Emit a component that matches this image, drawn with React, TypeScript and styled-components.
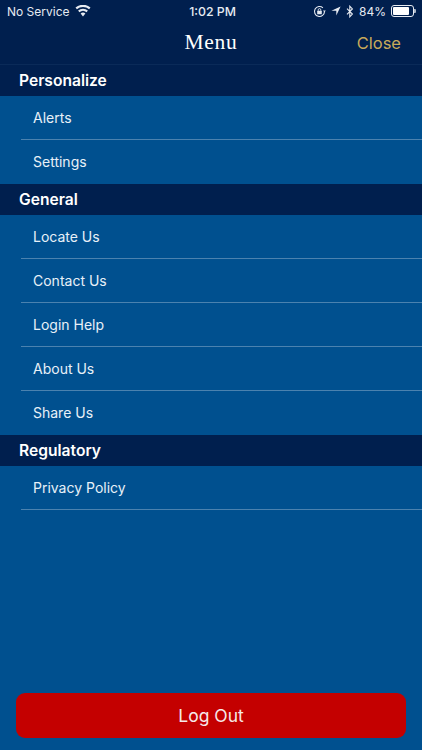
import React from "react";
import styled, { createGlobalStyle } from "styled-components";

const Global = createGlobalStyle`
  html, body { margin: 0; padding: 0; background: #00508f; }
  * { box-sizing: border-box; }
`;

const Screen = styled.div`
  width: 422px;
  height: 750px;
  display: flex;
  flex-direction: column;
  overflow: hidden;
  background: #00508f;
  color: #fff;
  font-family: Inter, "Liberation Sans", sans-serif;
`;

const Status = styled.div`
  height: 22px;
  padding: 0 5px 0 7px;
  display: grid;
  grid-template-columns: 1fr auto 1fr;
  align-items: center;
  background: #001f4e;
  font-size: 12px;
  color: #e6ebf2;
`;

const StatusLeft = styled.div`
  display: flex;
  align-items: center;
  gap: 5px;
`;

const StatusRight = styled.div`
  display: flex;
  align-items: center;
  justify-content: flex-end;
  gap: 5px;
`;

const Time = styled.div`
  font-weight: 500;
  font-size: 12.3px;
  margin-left: 1px;
`;

const Battery = styled.div`
  width: 23px;
  height: 12px;
  border: 1px solid #e6ebf2;
  border-radius: 3px;
  padding: 1px;
  position: relative;
  margin-right: 3px;
  &::after {
    content: "";
    position: absolute;
    right: -3px;
    top: 3px;
    width: 2px;
    height: 4px;
    background: #aab5c6;
    border-radius: 0 1px 1px 0;
  }
`;

const BatteryFill = styled.div`
  height: 100%;
  width: 84%;
  background: #fff;
  border-radius: 1px;
`;

const Nav = styled.div`
  height: 43px;
  display: flex;
  align-items: center;
  justify-content: center;
  position: relative;
  background: #001f4e;
  border-bottom: 1px solid #0a2a58;
`;

const Title = styled.div`
  font-family: "Liberation Serif", serif;
  font-size: 21.5px;
  letter-spacing: 0.7px;
  margin-top: -2px;
`;

const Close = styled.button`
  position: absolute;
  right: 21px;
  top: 11px;
  border: 0;
  padding: 0;
  background: none;
  color: #c8aa5a;
  font: 400 16.5px Inter, "Liberation Sans", sans-serif;
`;

const SectionHeader = styled.div`
  height: 31px;
  padding-left: 19px;
  padding-bottom: 1px;
  display: flex;
  align-items: center;
  background: #001f4e;
  font-size: 15.6px;
  font-weight: 600;
`;

const Row = styled.div<{ $line?: boolean }>`
  height: 44px;
  margin-left: 21px;
  padding-left: 12px;
  padding-bottom: 1px;
  display: flex;
  align-items: center;
  font-size: 14px;
  color: #e8f0f8;
  border-bottom: ${(p) => (p.$line ? "1px solid #4b82af" : "0")};
`;

const Spacer = styled.div`
  flex: 1;
`;

const LogOut = styled.button`
  height: 45px;
  margin: 0 16px 12.5px;
  border: 0;
  border-radius: 9px;
  background: #c40000;
  color: #f6e9e9;
  font: 400 17.5px Inter, "Liberation Sans", sans-serif;
`;

const Wifi = () => (
  <svg width="16" height="12" viewBox="0 0 16 12" fill="#e6ebf2">
    <path d="M8 11.5 5.6 8.6a3.6 3.6 0 0 1 4.8 0L8 11.5Z" />
    <path d="M4.4 7.2 3.1 5.6a7.4 7.4 0 0 1 9.8 0l-1.3 1.6a5.5 5.5 0 0 0-7.2 0Z" />
    <path d="M1.9 4.2.5 2.6a11.3 11.3 0 0 1 15 0l-1.4 1.6a9.3 9.3 0 0 0-12.2 0Z" />
  </svg>
);

const RotationLock = () => (
  <svg width="13" height="13" viewBox="0 0 13 13" fill="none" stroke="#e6ebf2">
    <path d="M11.5 6.5a5 5 0 1 1-1.6-3.7" strokeWidth="1.1" />
    <path d="M12.8 5.4h-2.8l1.4 2Z" fill="#e6ebf2" stroke="none" />
    <rect x="4.2" y="5.8" width="4.6" height="3.5" rx=".5" fill="#e6ebf2" stroke="none" />
    <path d="M5.2 5.8V4.9a1.3 1.3 0 0 1 2.6 0v.9" strokeWidth=".9" />
  </svg>
);

const Location = () => (
  <svg width="10" height="10" viewBox="0 0 10 10" fill="#e6ebf2">
    <path d="M9.6.4 5.3 9.6V4.7H.4Z" />
  </svg>
);

const Bluetooth = () => (
  <svg width="8" height="13" viewBox="0 0 8 13" fill="none" stroke="#e6ebf2" strokeWidth="1.1">
    <path d="M1 3.6 6.4 9 3.8 11.8V1.2L6.4 4 1 9.4" />
  </svg>
);

const sections = [
  { title: "Personalize", items: ["Alerts", "Settings"] },
  { title: "General", items: ["Locate Us", "Contact Us", "Login Help", "About Us", "Share Us"] },
  { title: "Regulatory", items: ["Privacy Policy"] },
];

export default function App() {
  return (
    <Screen>
      <Global />
      <Status>
        <StatusLeft>
          No Service <Wifi />
        </StatusLeft>
        <Time>1:02 PM</Time>
        <StatusRight>
          <RotationLock />
          <Location />
          <Bluetooth />
          <span>84%</span>
          <Battery>
            <BatteryFill />
          </Battery>
        </StatusRight>
      </Status>
      <Nav>
        <Title>Menu</Title>
        <Close>Close</Close>
      </Nav>
      {sections.map((s, si) => (
        <React.Fragment key={s.title}>
          <SectionHeader>{s.title}</SectionHeader>
          {s.items.map((item, i) => (
            <Row key={item} $line={i < s.items.length - 1 || si === sections.length - 1}>
              {item}
            </Row>
          ))}
        </React.Fragment>
      ))}
      <Spacer />
      <LogOut>Log Out</LogOut>
    </Screen>
  );
}
